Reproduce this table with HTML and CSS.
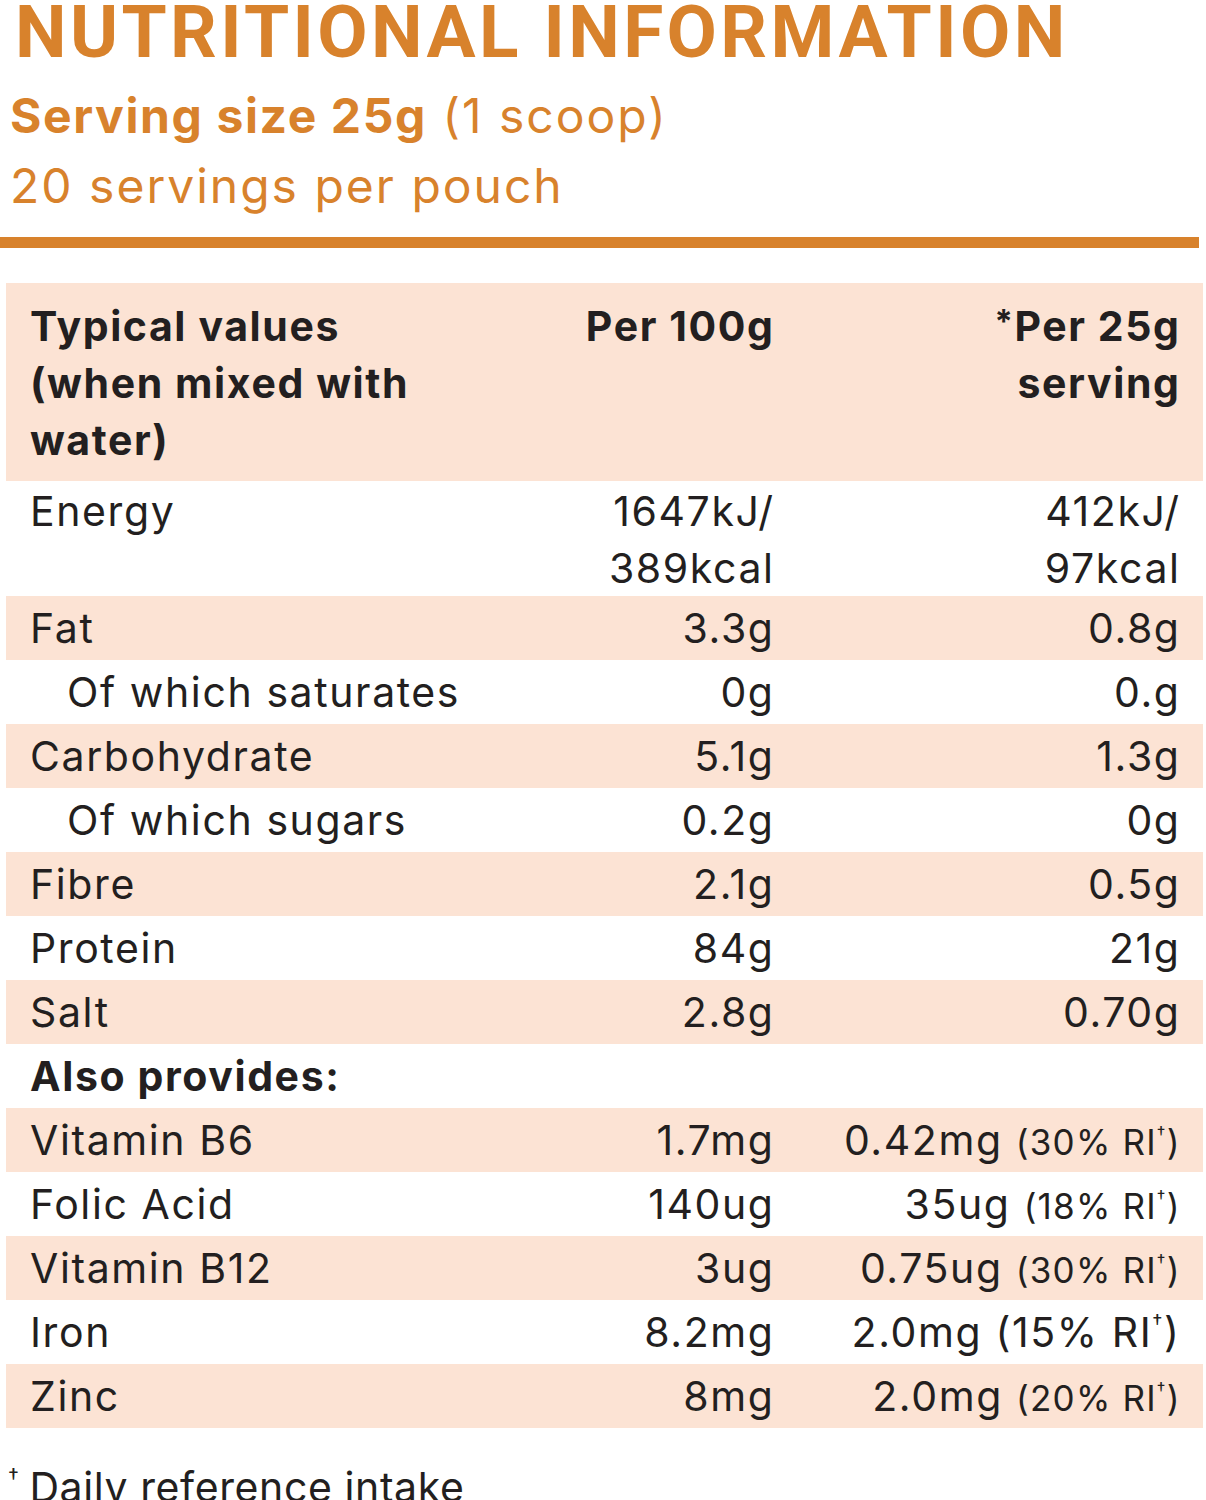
FILE: index.html
```html
<!DOCTYPE html>
<html lang="en">
<head>
<meta charset="utf-8">
<title>Nutritional Information</title>
<link rel="stylesheet" href="styles.css">
</head>
<body>
<div class="page">
  <h1 class="title">NUTRITIONAL INFORMATION</h1>
  <div class="serving">
    <p class="serving-line"><strong>Serving size 25g</strong> (1 scoop)</p>
    <p class="serving-line">20 servings per pouch</p>
  </div>
  <div class="rule"></div>

  <div class="table">
    <div class="row head shade">
      <div class="c1">Typical values<br>(when mixed with<br>water)</div>
      <div class="c2">Per 100g</div>
      <div class="c3"><span class="sup">*</span>Per 25g<br>serving</div>
    </div>
    <div class="row energy">
      <div class="c1">Energy</div>
      <div class="c2">1647kJ/<br>389kcal</div>
      <div class="c3">412kJ/<br>97kcal</div>
    </div>
    <div class="row shade">
      <div class="c1">Fat</div>
      <div class="c2">3.3g</div>
      <div class="c3">0.8g</div>
    </div>
    <div class="row">
      <div class="c1 sub">Of which saturates</div>
      <div class="c2">0g</div>
      <div class="c3">0.g</div>
    </div>
    <div class="row shade">
      <div class="c1">Carbohydrate</div>
      <div class="c2">5.1g</div>
      <div class="c3">1.3g</div>
    </div>
    <div class="row">
      <div class="c1 sub">Of which sugars</div>
      <div class="c2">0.2g</div>
      <div class="c3">0g</div>
    </div>
    <div class="row shade">
      <div class="c1">Fibre</div>
      <div class="c2">2.1g</div>
      <div class="c3">0.5g</div>
    </div>
    <div class="row">
      <div class="c1">Protein</div>
      <div class="c2">84g</div>
      <div class="c3">21g</div>
    </div>
    <div class="row shade">
      <div class="c1">Salt</div>
      <div class="c2">2.8g</div>
      <div class="c3">0.70g</div>
    </div>
    <div class="row">
      <div class="c1 bold">Also provides:</div>
      <div class="c2"></div>
      <div class="c3"></div>
    </div>
    <div class="row shade">
      <div class="c1">Vitamin B6</div>
      <div class="c2">1.7mg</div>
      <div class="c3">0.42mg <span class="ri">(30% RI<span class="dag">†</span>)</span></div>
    </div>
    <div class="row">
      <div class="c1">Folic Acid</div>
      <div class="c2">140ug</div>
      <div class="c3">35ug <span class="ri">(18% RI<span class="dag">†</span>)</span></div>
    </div>
    <div class="row shade">
      <div class="c1">Vitamin B12</div>
      <div class="c2">3ug</div>
      <div class="c3">0.75ug <span class="ri">(30% RI<span class="dag">†</span>)</span></div>
    </div>
    <div class="row">
      <div class="c1">Iron</div>
      <div class="c2">8.2mg</div>
      <div class="c3">2.0mg (15% RI<span class="dag">†</span>)</div>
    </div>
    <div class="row shade">
      <div class="c1">Zinc</div>
      <div class="c2">8mg</div>
      <div class="c3">2.0mg <span class="ri">(20% RI<span class="dag">†</span>)</span></div>
    </div>
  </div>

  <p class="footnote"><span class="fdag">†</span>Daily reference intake</p>
</div>
</body>
</html>
```

FILE: styles.css
```css
html, body {
  margin: 0;
  padding: 0;
  background: #ffffff;
}

.page {
  width: 1206px;
  height: 1500px;
  overflow: hidden;
  font-family: Inter, Lato, sans-serif;
  color: #231f20;
}

.title {
  margin: 0;
  padding: 0 0 0 15px;
  height: 64px;
  font-family: Roboto, "DejaVu Sans", sans-serif;
  font-weight: 700;
  font-size: 73px;
  line-height: 64px;
  letter-spacing: 3.4px;
  color: #d8822c;
  white-space: nowrap;
}

.serving {
  padding: 17px 0 0 10px;
}

.serving-line {
  margin: 0;
  font-size: 48px;
  line-height: 70px;
  letter-spacing: 2px;
  color: #d8822c;
  white-space: nowrap;
}

.serving-line strong {
  font-weight: 700;
  letter-spacing: 1.6px;
}

.rule {
  margin-top: 16px;
  width: 1199px;
  height: 11px;
  background: #d8822c;
}

.table {
  margin: 35px 3px 0 6px;
  display: flex;
  flex-direction: column;
}

.row {
  display: grid;
  grid-template-columns: 440px 1fr 406px;
  padding: 0 24px;
  height: 64px;
  font-size: 41px;
  line-height: 64px;
  letter-spacing: 1.6px;
  white-space: nowrap;
}

.row.shade {
  background: #fce3d4;
}

.row .c2,
.row .c3 {
  text-align: right;
}

.row .c2,
.row .c3 {
  margin-right: -1.6px;
}

.row.head {
  height: auto;
  padding-top: 15px;
  padding-bottom: 12px;
  line-height: 57px;
  font-weight: 700;
}

.row.energy {
  height: auto;
  padding-top: 2px;
  line-height: 56.5px;
}

.sub {
  padding-left: 37px;
}

.bold {
  font-weight: 700;
}

.sup {
  font-size: 0.8em;
  vertical-align: 0.25em;
  line-height: 0;
  font-weight: 700;
}

.ri {
  font-size: 35px;
  letter-spacing: 1.2px;
}

.dag {
  font-size: 0.5em;
  vertical-align: 0.9em;
  line-height: 0;
}

.footnote {
  margin: 16px 0 0 8px;
  font-size: 41px;
  line-height: 64px;
  letter-spacing: 0.6px;
  white-space: nowrap;
}

.fdag {
  font-size: 22px;
  vertical-align: 18px;
  margin-right: 10px;
}
```
